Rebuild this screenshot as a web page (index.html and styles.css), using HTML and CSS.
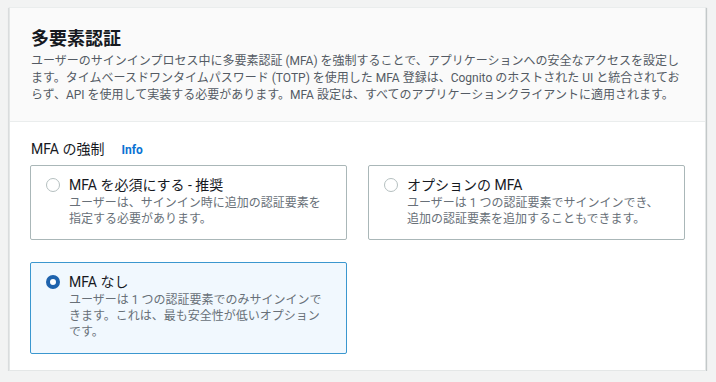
FILE: index.html
```html
<!DOCTYPE html>
<html lang="ja">
<head>
<meta charset="utf-8">
<link rel="stylesheet" href="styles.css">
</head>
<body>
<section class="card">
  <header class="card-header">
    <h2 class="title">多要素認証</h2>
    <p class="desc">ユーザーのサインインプロセス中に多要素認証 (MFA) を強制することで、アプリケーションへの安全なアクセスを設定します。タイムベースドワンタイムパスワード (TOTP) を使用した MFA 登録は、Cognito のホストされた UI と統合されておらず、API を使用して実装する必要があります。MFA 設定は、すべてのアプリケーションクライアントに適用されます。</p>
  </header>
  <div class="card-body">
    <div class="label-row">
      <span class="label">MFA の強制</span>
      <a class="info">Info</a>
    </div>
    <div class="tiles">
      <label class="tile">
        <span class="radio"></span>
        <span class="tile-text">
          <span class="tile-title">MFA を必須にする - 推奨</span>
          <span class="tile-desc">ユーザーは、サインイン時に追加の認証要素を指定する必要があります。</span>
        </span>
      </label>
      <label class="tile">
        <span class="radio"></span>
        <span class="tile-text">
          <span class="tile-title">オプションの MFA</span>
          <span class="tile-desc">ユーザーは 1 つの認証要素でサインインでき、<br>追加の認証要素を追加することもできます。</span>
        </span>
      </label>
      <label class="tile selected">
        <span class="radio checked"></span>
        <span class="tile-text">
          <span class="tile-title">MFA なし</span>
          <span class="tile-desc">ユーザーは 1 つの認証要素でのみサインインできます。これは、最も安全性が低いオプションです。</span>
        </span>
      </label>
    </div>
  </div>
</section>
</body>
</html>
```

FILE: styles.css
```css
html, body {
  margin: 0;
  padding: 0;
}
body {
  background: #f2f3f3;
  font-family: Roboto, "Noto Sans CJK JP", sans-serif;
  color: #16191f;
  padding: 7px 10px 0 9px;
}
.card {
  background: #ffffff;
  border: 1px solid #e4e7e7;
  border-top-color: #eaeded;
  box-shadow: 0 1px 1px 0 rgba(0, 28, 36, 0.3), 1px 1px 1px 0 rgba(0, 28, 36, 0.15), -1px 1px 1px 0 rgba(0, 28, 36, 0.05);
  height: 364px;
  box-sizing: border-box;
}
.card-header {
  background: #fafafa;
  border-bottom: 1px solid #eaeded;
  padding: 19px 20px 17px 21px;
}
.title {
  margin: 0;
  font-size: 18px;
  line-height: 24px;
  font-weight: 700;
  color: #16191f;
}
.desc {
  margin: 2px 0 0 0;
  font-size: 12px;
  line-height: 17px;
  color: #545b64;
}
.card-body {
  padding: 18px 20px 20px 20px;
}
.label-row {
  display: flex;
  align-items: baseline;
  gap: 17px;
  padding-left: 1px;
  margin-bottom: 7px;
}
.label {
  font-size: 14px;
  line-height: 18px;
  color: #16191f;
}
.info {
  font-size: 12px;
  font-weight: 700;
  color: #0972d3;
}
.tiles {
  display: grid;
  grid-template-columns: 1fr 1fr;
  column-gap: 21px;
  row-gap: 22px;
  align-items: start;
}
.tile {
  display: flex;
  gap: 9px;
  border: 1px solid #aab7b8;
  border-radius: 2px;
  padding: 10px 20px 12px 15px;
  background: #ffffff;
}
.tile.selected {
  border-color: #3b97cf;
  background: #f1f8fe;
  padding-bottom: 13px;
}
.radio {
  flex: none;
  border: 1px solid #b5bfc0;
  border-radius: 50%;
  margin-top: 2px;
  box-sizing: border-box;
  width: 14px;
  height: 14px;
  background: #fff;
}
.radio.checked {
  border: 4px solid #1f63ad;
  background: #fff;
}
.tile-text {
  display: flex;
  flex-direction: column;
}
.tile-title {
  font-size: 14px;
  line-height: 18px;
  color: #16191f;
}
.tile-desc {
  font-size: 12px;
  line-height: 16px;
  color: #687078;
  margin-top: 1px;
}
```
